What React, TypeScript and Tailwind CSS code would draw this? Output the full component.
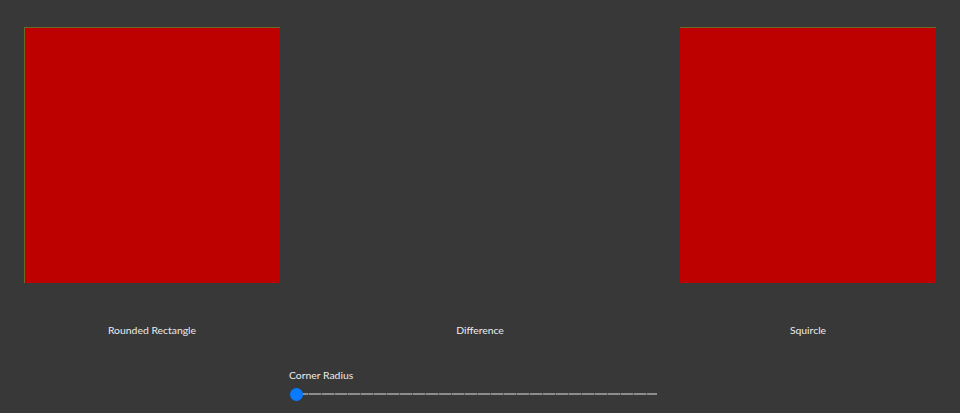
const Column = ({ label, shape }: { label: string; shape?: 'left' | 'right' }) => {
  return (
    <div className="flex w-[256px] flex-col items-center">
      {shape === 'left' && (
        <div className="h-[256px] w-[256px] border-l border-t border-[#6b6a22] bg-[#bd0000]" />
      )}
      {shape === 'right' && (
        <div className="h-[256px] w-[256px] border-t border-[#6b6a22] bg-[#bd0000]" />
      )}
      {!shape && <div className="h-[256px] w-[256px]" />}
      <span className="mt-[40px] leading-[15px]">{label}</span>
    </div>
  );
};

const App = () => {
  return (
    <div className="h-[413px] w-[960px] overflow-hidden bg-[#383838] font-['Lato','Open_Sans',sans-serif] text-[10.4px] text-[#ececec]">
      <div className="flex gap-x-[72px] pl-[24px] pt-[27px]">
        <Column label="Rounded Rectangle" shape="left" />
        <Column label="Difference" />
        <Column label="Squircle" shape="right" />
      </div>

      <div className="ml-[289px] mt-[30px] w-[368px]">
        <span className="block leading-[15px]">Corner Radius</span>
        <div className="relative mt-[5px] h-[13px]">
          <div className="absolute left-[7px] right-0 top-[5px] h-[2px] bg-[repeating-linear-gradient(90deg,#8c8c8c_0_12px,#5a5a5a_12px_13px)]" />
          <div className="absolute left-[1px] top-0 h-[13px] w-[13px] rounded-full bg-[#0a7aff]" />
        </div>
      </div>
    </div>
  );
};

export default App;
